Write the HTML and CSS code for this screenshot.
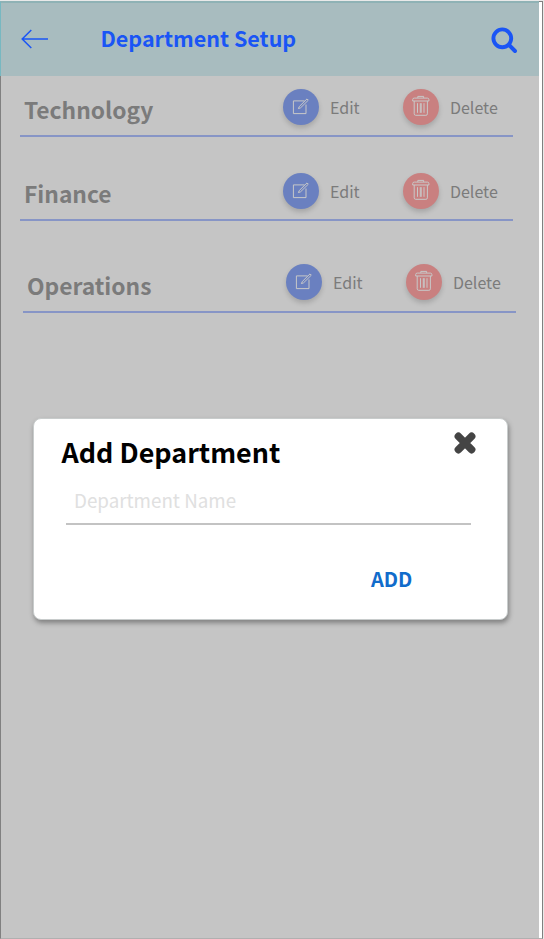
FILE: index.html
```
<!DOCTYPE html>
<html lang="en">
<head>
<meta charset="utf-8">
<title>Department Setup</title>
<link rel="stylesheet" href="styles.css">
</head>
<body>
<svg class="defs" width="0" height="0" aria-hidden="true">
  <symbol id="edit" viewBox="0 0 20 20"><path d="M13.5 3.9H2.4V16.6H15V7.5M7.4 11.6 8.3 9.5 16 1.9 17.3 3.2 9.6 10.8Z"/></symbol>
  <symbol id="trash" viewBox="0 0 20 22"><path d="M6.8 2.9V1.4H12.6V2.9M1.7 6V4.6Q1.7 3.1 3.2 3.1H16.4Q17.9 3.1 17.9 4.6V6ZM3.2 6V18.8Q3.2 20.3 4.7 20.3H14.9Q16.4 20.3 16.4 18.8V6M6.5 8.2V17.8M9.3 8.2V17.8M10.2 8.2V17.8M13 8.2V17.8"/></symbol>
</svg>
<div class="screen">
  <header class="bar">
    <svg class="back" viewBox="0 0 28 20"><path d="M27 10H1.2M10.3 1 1.2 10l9.1 9"/></svg>
    <h1 class="title">Department Setup</h1>
    <svg class="search" viewBox="0 0 27 27"><circle cx="11.3" cy="11.3" r="8.9"/><path d="M18 18l6 6"/></svg>
  </header>
  <main class="list">
    <section class="row">
      <h2 class="name">Technology</h2>
      <button class="action edit"><span class="disc"><svg class="pen"><use href="#edit"/></svg></span>Edit</button>
      <button class="action"><span class="disc"><svg class="bin"><use href="#trash"/></svg></span>Delete</button>
    </section>
    <section class="row">
      <h2 class="name">Finance</h2>
      <button class="action edit"><span class="disc"><svg class="pen"><use href="#edit"/></svg></span>Edit</button>
      <button class="action"><span class="disc"><svg class="bin"><use href="#trash"/></svg></span>Delete</button>
    </section>
    <section class="row last">
      <h2 class="name">Operations</h2>
      <button class="action edit"><span class="disc"><svg class="pen"><use href="#edit"/></svg></span>Edit</button>
      <button class="action"><span class="disc"><svg class="bin"><use href="#trash"/></svg></span>Delete</button>
    </section>
  </main>
  <div class="dialog" role="dialog">
    <div class="head">
      <h2 class="heading">Add Department</h2>
      <svg class="close" viewBox="0 0 22 22"><path d="M4.4 4.4l13.2 13.2M17.6 4.4L4.4 17.6"/></svg>
    </div>
    <div class="field">Department Name</div>
    <button class="add">ADD</button>
  </div>
</div>
</body>
</html>
```
FILE: styles.css
```
* { box-sizing: border-box; }
body {
  margin: 0;
  padding-top: 1px;
  height: 939px;
  overflow: hidden;
  background: #e9e9e9;
  font-family: "Noto Sans CJK SC", "Noto Sans", sans-serif;
}
.defs { display: none; }
h1, h2 { margin: 0; font-weight: 700; white-space: nowrap; }
button { border: 0; padding: 0; background: none; font: inherit; color: inherit; }
svg { fill: none; display: block; }
.screen {
  position: relative;
  width: 543px;
  height: 938px;
  border: 1px solid #808080;
  border-bottom-color: #b0b0b0;
  background: linear-gradient(to right, #c5c5c5 538px, #fff 538px);
}
.bar {
  display: flex;
  align-items: flex-start;
  width: 539px;
  height: 75px;
  margin: -1px 0 0 -1px;
  padding: 23px 0 0 21px;
  border-top: 2px solid #8fb2b5;
  border-left: 1px solid #77b8c1;
  background: #a8bcbf;
  color: #1a55f5;
}
.bar svg { stroke: currentColor; }
.back { width: 28px; height: 20px; margin: 3px 51.5px 0 -1px; stroke-width: 1.5; }
.title { width: 390.5px; font-size: 21.5px; line-height: 24px; }
.search { width: 27px; height: 27px; margin-top: 1px; stroke-width: 3.9; stroke-linecap: round; }
.list { width: 538px; padding: 0 26px 0 19px; }
.row {
  display: grid;
  grid-template-columns: 262px 120px 1fr;
  align-items: start;
  height: 84px;
  padding-top: 36px;
  border-bottom: 2px solid #8795c6;
}
.row:first-child { height: 61px; padding-top: 13px; }
.row.last { height: 92px; padding-top: 43px; margin: 0 -3px 0 3px; border-color: #8795c6; }
.name { padding-left: 4px; margin-top: 6px; font-size: 22.8px; line-height: 30px; color: #7b7b7b; }
.last .name { margin-top: 7px; }
.action { display: flex; align-items: center; gap: 11.5px; font-size: 16px; line-height: 36px; color: #7b7b7b; }
.disc {
  display: grid;
  place-items: center;
  width: 36px;
  height: 36px;
  margin-left: .5px;
  border-radius: 50%;
  background: #c98080;
  box-shadow: 0 3px 5px rgba(0, 0, 0, .16);
}
.edit .disc { background: #6a80c0; }
.disc svg { stroke: #c8c8c8; stroke-width: 1; }
.pen { width: 20px; height: 20px; }
.bin { width: 20px; height: 22px; margin-top: -2px; }
.dialog {
  position: absolute;
  left: 32px;
  top: 416px;
  width: 475px;
  height: 202px;
  padding: 13px 31px 0 27.5px;
  border: 1px solid #c8cccc;
  border-radius: 8px;
  background: #fff;
  box-shadow: 1px 3px 5px rgba(0, 0, 0, .35);
}
.head { display: flex; justify-content: space-between; }
.heading { font-size: 26.9px; line-height: 40px; color: #000; }
.close { width: 22px; height: 22px; stroke: #444; stroke-width: 7.6; stroke-linecap: round; }
.field {
  width: 405px;
  height: 53px;
  margin-left: 4.5px;
  padding: 11px 0 0 8px;
  border-bottom: 2px solid #c3c3c3;
  font-size: 18.8px;
  line-height: 34px;
  color: #e0e0e0;
}
.add { display: block; margin: 39px 0 0 309.5px; font-size: 20px; font-weight: 700; line-height: 30px; color: #116ccb; }
```
